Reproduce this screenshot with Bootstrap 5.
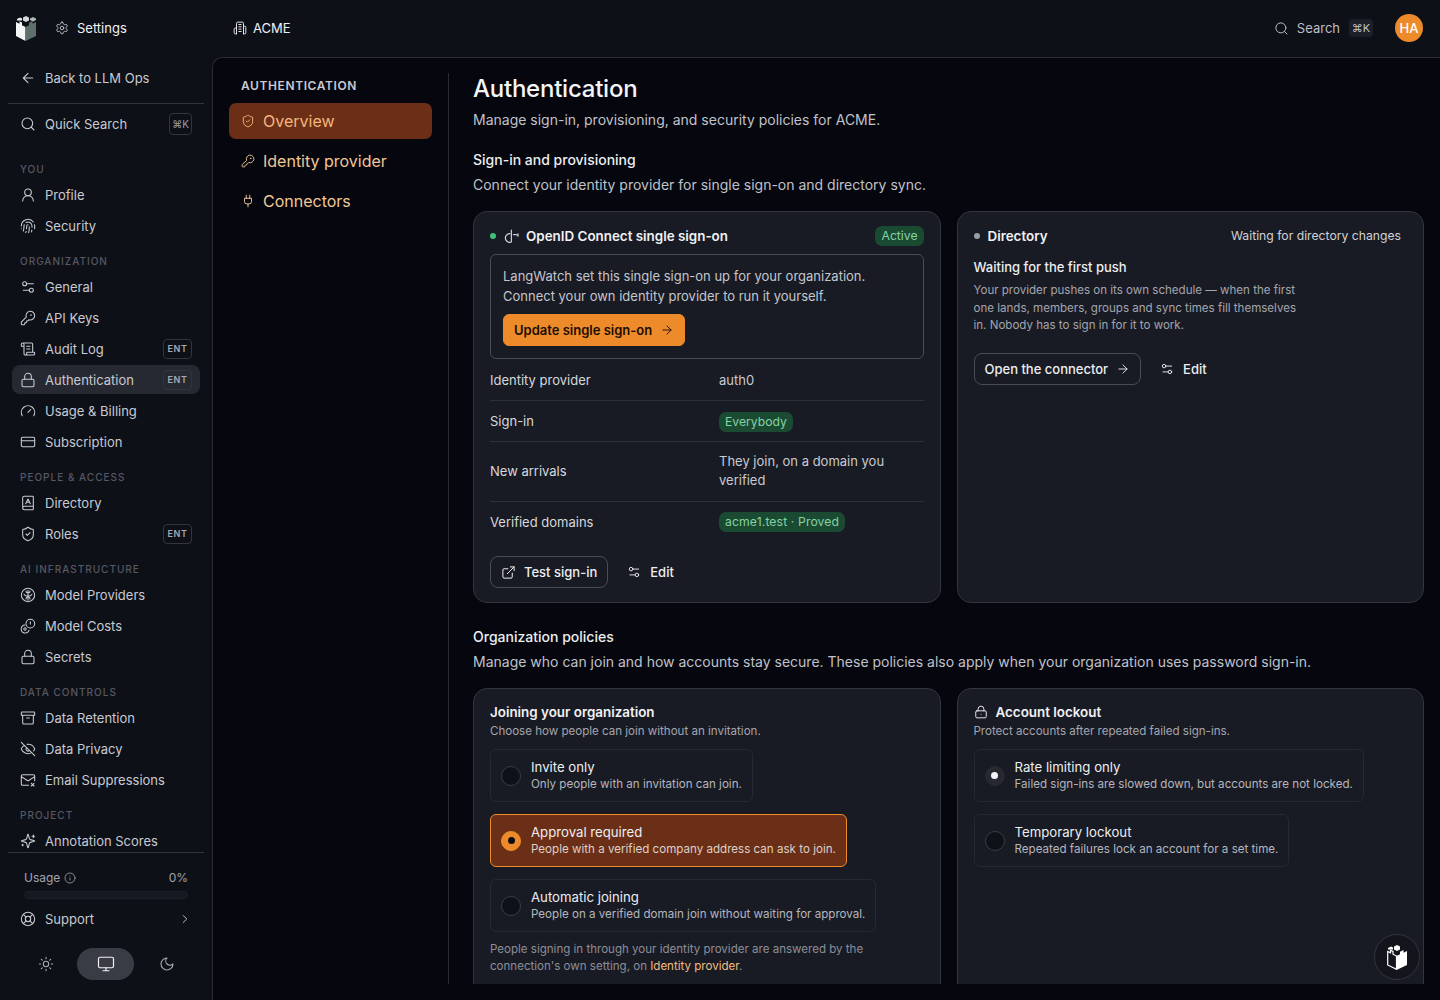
<!doctype html>
<html lang="en" data-bs-theme="dark">
<head>
<meta charset="utf-8">
<title>Authentication</title>
<link href="https://cdn.jsdelivr.net/npm/bootstrap@5.3.0/dist/css/bootstrap.min.css" rel="stylesheet">
<style>
html,body{height:1000px;overflow:hidden}
body{font-family:Inter,"Noto Sans",sans-serif;background:#0e1018;color:#e4e5ea;font-size:13px;line-height:20px}
svg.ic{width:16px;height:16px;fill:none;stroke:currentColor;stroke-width:1.6;stroke-linecap:round;stroke-linejoin:round;flex:none}
.side{width:212px;height:1000px;flex:none}
.side-top{height:56px;padding-left:16px}
.logo{width:20px;height:26px;flex:none}
.side-top .gear{margin-left:19px;margin-right:8px;width:14px;height:14px;color:#c6c8cf}
.side-top span{color:#f0f1f4}
.side-link{height:29px;padding:0 12px 0 20px;margin:0 12px 0 0;color:#c8cad1;border-radius:8px;gap:9px;text-decoration:none}
.side-back{margin-top:7px;height:29px}
.side-hr{border-top:1px solid #33353e;margin:11px 8px 5px}
.kbd-s{margin-left:auto;margin-right:-4px;border:1px solid #33353e;border-radius:4px;font-size:10px;line-height:1;color:#9b9da6;width:23px;height:22px;display:flex;align-items:center;justify-content:center;flex:none}
.ent{margin-left:auto;margin-right:-4px;border:1px solid #33353e;border-radius:4px;font-size:9px;font-weight:600;letter-spacing:.07em;color:#a8aab2;width:29px;height:20px;display:flex;align-items:center;justify-content:center;flex:none}
.side-scroll{height:714px;overflow:hidden;flex:none;padding-top:24px}
.side-label{font-size:10px;line-height:14px;letter-spacing:.1em;color:#565862;font-weight:500;text-transform:uppercase;padding-left:20px;margin:0 0 4px;height:14px}
.side-scroll .stack{display:flex;flex-direction:column;gap:2px}
.sec{margin-bottom:14px}
.side-link.on{margin-left:12px;padding-left:8px;margin-right:12px;padding-right:12px;background:#272932}
.side-foot{border-top:1px solid #33353e;margin:0 8px;padding-top:16px}
.usage{padding:0 16px;font-size:12px;line-height:18px;color:#a2a4ad}
.usage .bar{height:8px;margin-top:4px;border-radius:4px;background:#171922;border:1px solid #1d1f28}
.side-foot .side-link{margin:5px 0 0;padding:0 12px}
.theme{margin-top:15px;padding:0 20px 0 21px;justify-content:space-between;align-items:center}
.theme .pill{width:57px;height:32px;border-radius:16px;background:#3a3c45;color:#f0f1f4;display:flex;align-items:center;justify-content:center;margin:0 1px 0 -1px}
.theme>svg{color:#a8aab2;margin:0 9px}
.topbar{height:57px;flex:none;padding:0 17px 1px 21px}
.topbar .org{gap:6px;color:#f0f1f4}
.topbar .search{gap:8px;color:#bcbec6;margin-right:22px}
.kbd-t{background:#1d1f28;border-radius:4px;font-size:11px;width:24px;height:18px;display:flex;align-items:center;justify-content:center;margin-left:1px;color:#c0c2ca}
.avatar{width:28px;height:28px;border-radius:50%;background:#ed8b2a;color:#fff;font-size:13px;font-weight:500;display:flex;align-items:center;justify-content:center}
.panel{height:943px;background:#05060e;border-top:1px solid #2a2c35;border-left:1px solid #2a2c35;border-top-left-radius:10px;padding:15px 0 0;position:relative}
.subnav{width:236px;flex:none;border-right:1px solid #2a2c35;padding:0 16px;height:911px}
.subnav h6{font-size:12px;line-height:16px;font-weight:600;letter-spacing:.05em;color:#c8cad1;margin:5px 0 9px 12px}
.sub-item{height:36px;border-radius:7px;padding-left:12px;gap:8px;font-size:16px;color:#f2c796;text-decoration:none;margin-bottom:4px}
.sub-item svg{width:14px;height:14px}
.sub-item.on{background:#6b2f17;color:#f6b57c}
.content{flex:1;min-width:0;padding:0 16px 0 24px;height:911px;overflow:hidden;font-size:14px}
.content h1{font-size:24px;line-height:32px;font-weight:500;color:#f4f5f7;margin:0 0 3px;letter-spacing:-.01em}
.lead2{color:#c0c2ca;font-size:14px;line-height:24px;margin:0}
.h2x{font-size:14px;line-height:20px;font-weight:500;color:#eceef1;margin:18px 0 3px}
.card.pc{--bs-card-bg:#191b24;--bs-card-border-color:#33353e;--bs-card-border-radius:14px;--bs-card-inner-border-radius:13px;padding:14px 16px 16px;color:#e4e5ea;font-size:13px}
.card.pc2{padding-top:13px}
.row.g-3{--bs-gutter-x:16px;--bs-gutter-y:0}
.dot{width:6px;height:6px;border-radius:50%;flex:none}
.card-t{font-weight:600;color:#f0f1f4;font-size:13.4px}
.bdg{--bs-badge-padding-x:6px;--bs-badge-padding-y:0;--bs-badge-font-size:12.2px;--bs-badge-font-weight:400;--bs-badge-color:#84d3a2;--bs-badge-border-radius:7px;background:#1b4a33;line-height:20px}
.bdg-w{letter-spacing:.01em}
.inset{border:1px solid #4a4c55;border-radius:6px;padding:11px 12px 12px;margin-top:8px;color:#c4c6cd}
.btn-org{--bs-btn-bg:#ed8b2a;--bs-btn-color:#1c0d02;--bs-btn-hover-bg:#ed8b2a;--bs-btn-border-color:#ed8b2a;--bs-btn-padding-x:10px;--bs-btn-padding-y:5px;--bs-btn-font-size:13px;--bs-btn-font-weight:600;--bs-btn-border-radius:6px;--bs-btn-line-height:20px;margin-top:8px;display:inline-flex;align-items:center;gap:8px}
.btn-ln{--bs-btn-color:#eceef1;--bs-btn-border-color:#4a4c55;--bs-btn-padding-x:10px;--bs-btn-padding-y:5px;--bs-btn-font-size:13px;--bs-btn-font-weight:500;--bs-btn-border-radius:8px;--bs-btn-line-height:20px;display:inline-flex;align-items:center;gap:8px}
.btn-gh{--bs-btn-color:#eceef1;--bs-btn-border-color:transparent;--bs-btn-padding-x:10px;--bs-btn-padding-y:5px;--bs-btn-font-size:13px;--bs-btn-font-weight:500;--bs-btn-line-height:20px;display:inline-flex;align-items:center;gap:9px;margin-left:8px}
.kv{display:flex;align-items:center;border-bottom:1px solid #2e3039;color:#d6d8dd;min-height:41px}
.kv.first{min-height:42px}
.kv.tall{min-height:60px;padding-bottom:2px}
.kv.tall>div:last-child{line-height:19px}
.kv.end{border-bottom:0;min-height:39px}
.kv>div:first-child{width:229px;flex:none}
.kv>div:last-child{color:#c8cad1;line-height:20px}
.para{font-size:11.55px;line-height:17.5px;color:#a3a5ae;max-width:330px;margin:5px 0 0}
.muted12{font-size:11.55px;line-height:18px;color:#a3a5ae}
.note{margin-top:9px;line-height:17px;color:#8c8e97}
.opt{display:inline-flex;align-items:center;gap:10px;border:1px solid #262832;border-radius:6px;padding:7px 10px 9px;height:53px}
.opt .radio{margin-top:2px}
.opt .tt{font-size:13.2px;line-height:18px;color:#eceef1}
.opt .ss{font-size:11.6px;line-height:16px;color:#b4b6be}
.opt.on{background:#6b2f17;border-color:#ed8b2a}
.opt.on .ss{color:#ddcfc6}
.radio{width:20px;height:20px;border-radius:50%;background:#0f1119;border:1px solid #3a3c45;flex:none;display:flex;align-items:center;justify-content:center}
.opt.on .radio{background:#ed8b2a;border-color:#ed8b2a}
.opt.on .radio i{width:7px;height:7px;background:#0b0b0f;border-radius:50%}
.radio.gray{background:#262832;border-color:#262832}
.radio.gray i{width:7px;height:7px;background:#f5f5f7;border-radius:50%}
.opts{display:flex;flex-direction:column;align-items:flex-start;gap:12px;margin-top:9px}
.fab{position:absolute;right:20px;bottom:20px;width:46px;height:46px;border-radius:50%;background:#13141c;border:1px solid #33353e;display:flex;align-items:center;justify-content:center}
a.link-o{color:#f0bd80;text-decoration:none}
</style>
</head>
<body>
<svg width="0" height="0" class="position-absolute">
<symbol id="logo" viewBox="0 0 20 26"><polygon points="0,7 0,21 9.500,26 9.500,12 6,10.200 6,7.500 3.500,6.300 3.500,8.800" fill="#f4f6f5" stroke="none"/><polygon points="9.500,12 9.500,26 20,21 20,7 16.500,8.800 16.500,6 13,7.800 13,10.300" fill="#5f706c" stroke="none"/><polygon points="7,2.500 10,1 13,2.500 13,5.500 10,7 7,5.500" fill="#d5dbd9" stroke="none"/><polygon points="14,3.500 17,2 20,3.500 20,5 17,6.500 14,5" fill="#aeb8b5" stroke="none"/><polygon points="1,4 4,2.500 6,3.500 6,5.500 3.500,5.500 1,5.500" fill="#e8ecea" stroke="none"/></symbol>
<symbol id="logow" viewBox="0 0 20 26"><polygon points="0.700,7.500 0.700,21 9.500,25.300 9.500,12 6,10.200 6,7.500 3.500,6.300 3.500,8.800" fill="none" stroke="#fff" stroke-width="1.200"/><polygon points="9.500,12 9.500,26 20,21 20,7 16.500,8.800 16.500,6 13,7.800 13,10.300" fill="#fff" stroke="none"/><polygon points="7,2.500 10,1 13,2.500 13,5.500 10,7 7,5.500" fill="#fff" stroke="none"/><polygon points="1,4 4,2.500 6,3.500 6,5.500 1,5.500" fill="#fff" stroke="none"/></symbol>
<symbol id="arrow-left" viewBox="0 0 24 24"><path d="m12 19-7-7 7-7M19 12H5"/></symbol>
<symbol id="arrow-right" viewBox="0 0 24 24"><path d="M5 12h14M12 5l7 7-7 7"/></symbol>
<symbol id="search" viewBox="0 0 24 24"><circle cx="11" cy="11" r="8"/><path d="m21 21-4.3-4.3"/></symbol>
<symbol id="user" viewBox="0 0 24 24"><circle cx="12" cy="8" r="5"/><path d="M20 21a8 8 0 0 0-16 0"/></symbol>
<symbol id="finger" viewBox="0 0 24 24"><path d="M12 10a2 2 0 0 0-2 2c0 1.02-.1 2.51-.26 4M14 13.12c0 2.38 0 6.38-1 8.88M17.29 21.02c.12-.6.43-2.3.5-3.02M2 12a10 10 0 0 1 18-6M2 16h.01M21.8 16c.2-2 .131-5.354 0-6M5 19.5C5.5 18 6 15 6 12a6 6 0 0 1 .34-2M8.65 22c.21-.66.45-1.32.57-2M9 6.8a6 6 0 0 1 9 5.2v2"/></symbol>
<symbol id="sliders" viewBox="0 0 24 24"><path d="M20 7h-9M14 17H5"/><circle cx="17" cy="17" r="3"/><circle cx="7" cy="7" r="3"/></symbol>
<symbol id="key" viewBox="0 0 24 24"><path d="M2.586 17.414A2 2 0 0 0 2 18.828V21a1 1 0 0 0 1 1h3a1 1 0 0 0 1-1v-1a1 1 0 0 1 1-1h1a1 1 0 0 0 1-1v-1a1 1 0 0 1 1-1h.172a2 2 0 0 0 1.414-.586l.814-.814a6.5 6.5 0 1 0-4-4z"/><circle cx="16.5" cy="7.5" r=".5"/></symbol>
<symbol id="scroll" viewBox="0 0 24 24"><path d="M15 12h-5M15 8h-5M19 17V5a2 2 0 0 0-2-2H4M8 21h12a2 2 0 0 0 2-2v-1a1 1 0 0 0-1-1H11a1 1 0 0 0-1 1v1a2 2 0 1 1-4 0V5a2 2 0 1 0-4 0v2a1 1 0 0 0 1 1h3"/></symbol>
<symbol id="lock" viewBox="0 0 24 24"><rect x="3" y="11" width="18" height="11" rx="2"/><path d="M7 11V7a5 5 0 0 1 10 0v4"/></symbol>
<symbol id="lockd" viewBox="0 0 24 24"><rect x="3" y="10" width="18" height="12" rx="2"/><path d="M7 10V7a5 5 0 0 1 10 0v3M12 16h.01"/></symbol>
<symbol id="gauge" viewBox="0 0 24 24"><path d="m12 14 4-4M3.34 19a10 10 0 1 1 17.32 0"/></symbol>
<symbol id="card" viewBox="0 0 24 24"><rect x="2" y="5" width="20" height="14" rx="2"/><path d="M2 10h20"/></symbol>
<symbol id="book" viewBox="0 0 24 24"><path d="M4 19.5v-15A2.5 2.5 0 0 1 6.5 2H19a1 1 0 0 1 1 1v18a1 1 0 0 1-1 1H6.5a1 1 0 0 1 0-5H20M8.5 13l3.5-7 3.500 7M9.500 11h5"/></symbol>
<symbol id="shield" viewBox="0 0 24 24"><path d="M20 13c0 5-3.500 7.500-7.660 8.950a1 1 0 0 1-.67-.01C7.500 20.500 4 18 4 13V6a1 1 0 0 1 1-1c2 0 4.500-1.200 6.240-2.720a1.170 1.170 0 0 1 1.520 0C14.510 3.810 17 5 19 5a1 1 0 0 1 1 1zM9 12l2 2 4-4"/></symbol>
<symbol id="brain" viewBox="0 0 24 24"><circle cx="12" cy="12" r="10"/><path d="M12 5v15M12 9c-2 0-3-1-3-3M12 9c2 0 3-1 3-3M12 14c-3 0-5-1-6-3M12 14c3 0 5-1 6-3M9 18c0-2 1-3 3-3s3 1 3 3"/></symbol>
<symbol id="coins" viewBox="0 0 24 24"><circle cx="15.500" cy="8.500" r="6.500"/><path d="M15.500 5.500v3.500M7.500 10.500a6 6 0 1 0 6 8"/><circle cx="7.500" cy="16.500" r="1.800"/></symbol>
<symbol id="archive" viewBox="0 0 24 24"><rect x="2" y="3" width="20" height="5" rx="1"/><path d="M4 8v11a2 2 0 0 0 2 2h12a2 2 0 0 0 2-2V8M10 12h4"/></symbol>
<symbol id="eyeoff" viewBox="0 0 24 24"><path d="M10.733 5.076a10.744 10.744 0 0 1 11.205 6.575 1 1 0 0 1 0 .696 10.747 10.747 0 0 1-1.444 2.490M14.084 14.158a3 3 0 0 1-4.242-4.242M17.479 17.499a10.750 10.750 0 0 1-15.417-5.151 1 1 0 0 1 0-.696 10.750 10.750 0 0 1 4.446-5.143M2 2l20 20"/></symbol>
<symbol id="mailx" viewBox="0 0 24 24"><path d="M22 13V6a2 2 0 0 0-2-2H4a2 2 0 0 0-2 2v12c0 1.100.9 2 2 2h9M22 7l-8.970 5.700a1.940 1.940 0 0 1-2.060 0L2 7M17 17l4 4M21 17l-4 4"/></symbol>
<symbol id="spark" viewBox="0 0 24 24"><path d="M9.937 15.500A2 2 0 0 0 8.500 14.063l-6.135-1.582a.5.5 0 0 1 0-.962L8.500 9.936A2 2 0 0 0 9.937 8.500l1.582-6.135a.5.5 0 0 1 .963 0L14.063 8.500A2 2 0 0 0 15.500 9.937l6.135 1.581a.5.5 0 0 1 0 .964L15.500 14.063a2 2 0 0 0-1.437 1.437l-1.582 6.135a.5.5 0 0 1-.963 0zM20 3v4M22 5h-4M4 17v2M5 18H3"/></symbol>
<symbol id="info" viewBox="0 0 24 24"><circle cx="12" cy="12" r="10"/><path d="M12 16v-4M12 8h.01"/></symbol>
<symbol id="buoy" viewBox="0 0 24 24"><circle cx="12" cy="12" r="10"/><path d="m4.930 4.930 4.240 4.240M14.830 9.170l4.240-4.240M14.830 14.830l4.240 4.240M9.170 14.830l-4.240 4.240"/><circle cx="12" cy="12" r="4"/></symbol>
<symbol id="chev" viewBox="0 0 24 24"><path d="m9 18 6-6-6-6"/></symbol>
<symbol id="sun" viewBox="0 0 24 24"><circle cx="12" cy="12" r="4"/><path d="M12 2v2M12 20v2M4.930 4.930l1.410 1.410M17.660 17.660l1.410 1.410M2 12h2M20 12h2M6.340 17.660l-1.410 1.410M19.070 4.930l-1.410 1.410"/></symbol>
<symbol id="monitor" viewBox="0 0 24 24"><rect x="2" y="3" width="20" height="14" rx="2"/><path d="M8 21h8M12 17v4"/></symbol>
<symbol id="moon" viewBox="0 0 24 24"><path d="M12 3a6 6 0 0 0 9 9 9 9 0 1 1-9-9Z"/></symbol>
<symbol id="gear" viewBox="0 0 24 24"><path d="M12.220 2h-.44a2 2 0 0 0-2 2v.18a2 2 0 0 1-1 1.730l-.43.25a2 2 0 0 1-2 0l-.15-.08a2 2 0 0 0-2.730.73l-.22.38a2 2 0 0 0 .73 2.730l.15.1a2 2 0 0 1 1 1.720v.51a2 2 0 0 1-1 1.740l-.15.09a2 2 0 0 0-.73 2.730l.22.38a2 2 0 0 0 2.730.73l.15-.08a2 2 0 0 1 2 0l.43.25a2 2 0 0 1 1 1.730V20a2 2 0 0 0 2 2h.44a2 2 0 0 0 2-2v-.18a2 2 0 0 1 1-1.730l.43-.25a2 2 0 0 1 2 0l.15.08a2 2 0 0 0 2.730-.73l.22-.39a2 2 0 0 0-.73-2.730l-.15-.08a2 2 0 0 1-1-1.740v-.5a2 2 0 0 1 1-1.740l.15-.09a2 2 0 0 0 .73-2.730l-.22-.38a2 2 0 0 0-2.730-.73l-.15.08a2 2 0 0 1-2 0l-.43-.25a2 2 0 0 1-1-1.730V4a2 2 0 0 0-2-2z"/><circle cx="12" cy="12" r="3"/></symbol>
<symbol id="bldg" viewBox="0 0 24 24"><path d="M6 22V4a2 2 0 0 1 2-2h8a2 2 0 0 1 2 2v18M6 12H4a2 2 0 0 0-2 2v6a2 2 0 0 0 2 2h2M18 9h2a2 2 0 0 1 2 2v9a2 2 0 0 1-2 2h-2M10 6h4M10 10h4M10 14h4M10 18h4"/></symbol>
<symbol id="plug" viewBox="0 0 24 24"><path d="M12 22v-5M9 8V2M15 8V2M18 8v5a4 4 0 0 1-4 4h-4a4 4 0 0 1-4-4V8Z"/></symbol>
<symbol id="ext" viewBox="0 0 24 24"><path d="M15 3h6v6M10 14 21 3M18 13v6a2 2 0 0 1-2 2H5a2 2 0 0 1-2-2V8a2 2 0 0 1 2-2h6"/></symbol>
<symbol id="oid" viewBox="0 0 24 24"><path d="M11 3v18M9 8.500a6.500 6.500 0 1 0 2 12.500M14 10c2-.5 4-.5 5.500.5M21 8.500v4"/></symbol>
</svg>

<div class="d-flex">
<aside class="side d-flex flex-column">
  <div class="side-top d-flex align-items-center">
    <svg class="logo"><use href="#logo"/></svg>
    <svg class="ic gear"><use href="#gear"/></svg><span>Settings</span>
  </div>
  <a class="side-link side-back d-flex align-items-center" href="#"><svg class="ic"><use href="#arrow-left"/></svg>Back to LLM Ops</a>
  <div class="side-hr"></div>
  <a class="side-link d-flex align-items-center" href="#"><svg class="ic"><use href="#search"/></svg>Quick Search<span class="kbd-s">⌘K</span></a>
  <div class="side-scroll">
    <div class="sec"><div class="side-label">You</div><div class="stack">
      <a class="side-link d-flex align-items-center" href="#"><svg class="ic"><use href="#user"/></svg>Profile</a>
      <a class="side-link d-flex align-items-center" href="#"><svg class="ic"><use href="#finger"/></svg>Security</a>
    </div></div>
    <div class="sec"><div class="side-label">Organization</div><div class="stack">
      <a class="side-link d-flex align-items-center" href="#"><svg class="ic"><use href="#sliders"/></svg>General</a>
      <a class="side-link d-flex align-items-center" href="#"><svg class="ic"><use href="#key"/></svg>API Keys</a>
      <a class="side-link d-flex align-items-center" href="#"><svg class="ic"><use href="#scroll"/></svg>Audit Log<span class="ent">ENT</span></a>
      <a class="side-link on d-flex align-items-center" href="#"><svg class="ic"><use href="#lock"/></svg>Authentication<span class="ent">ENT</span></a>
      <a class="side-link d-flex align-items-center" href="#"><svg class="ic"><use href="#gauge"/></svg>Usage &amp; Billing</a>
      <a class="side-link d-flex align-items-center" href="#"><svg class="ic"><use href="#card"/></svg>Subscription</a>
    </div></div>
    <div class="sec"><div class="side-label">People &amp; Access</div><div class="stack">
      <a class="side-link d-flex align-items-center" href="#"><svg class="ic"><use href="#book"/></svg>Directory</a>
      <a class="side-link d-flex align-items-center" href="#"><svg class="ic"><use href="#shield"/></svg>Roles<span class="ent">ENT</span></a>
    </div></div>
    <div class="sec"><div class="side-label">AI Infrastructure</div><div class="stack">
      <a class="side-link d-flex align-items-center" href="#"><svg class="ic"><use href="#brain"/></svg>Model Providers</a>
      <a class="side-link d-flex align-items-center" href="#"><svg class="ic"><use href="#coins"/></svg>Model Costs</a>
      <a class="side-link d-flex align-items-center" href="#"><svg class="ic"><use href="#lock"/></svg>Secrets</a>
    </div></div>
    <div class="sec"><div class="side-label">Data Controls</div><div class="stack">
      <a class="side-link d-flex align-items-center" href="#"><svg class="ic"><use href="#archive"/></svg>Data Retention</a>
      <a class="side-link d-flex align-items-center" href="#"><svg class="ic"><use href="#eyeoff"/></svg>Data Privacy</a>
      <a class="side-link d-flex align-items-center" href="#"><svg class="ic"><use href="#mailx"/></svg>Email Suppressions</a>
    </div></div>
    <div class="sec"><div class="side-label">Project</div><div class="stack">
      <a class="side-link d-flex align-items-center" href="#"><svg class="ic"><use href="#spark"/></svg>Annotation Scores</a>
    </div></div>
  </div>
  <div class="side-foot">
    <div class="usage">
      <div class="d-flex justify-content-between align-items-center"><span class="d-flex align-items-center gap-1">Usage <svg class="ic" style="width:12px;height:12px"><use href="#info"/></svg></span><span>0%</span></div>
      <div class="bar"></div>
    </div>
    <a class="side-link d-flex align-items-center" href="#"><svg class="ic"><use href="#buoy"/></svg>Support<svg class="ic ms-auto" style="width:14px;height:14px"><use href="#chev"/></svg></a>
    <div class="theme d-flex">
      <svg class="ic"><use href="#sun"/></svg>
      <span class="pill"><svg class="ic" style="width:18px;height:18px"><use href="#monitor"/></svg></span>
      <svg class="ic"><use href="#moon"/></svg>
    </div>
  </div>
</aside>

<div class="flex-grow-1 d-flex flex-column" style="min-width:0">
  <header class="topbar d-flex align-items-center justify-content-between">
    <div class="org d-flex align-items-center"><svg class="ic" style="width:14px;height:14px"><use href="#bldg"/></svg>ACME</div>
    <div class="d-flex align-items-center">
      <div class="search d-flex align-items-center"><svg class="ic" style="width:15px;height:15px"><use href="#search"/></svg>Search<span class="kbd-t">⌘K</span></div>
      <div class="avatar">HA</div>
    </div>
  </header>
  <main class="panel d-flex">
    <nav class="subnav">
      <h6>AUTHENTICATION</h6>
      <a class="sub-item on d-flex align-items-center" href="#"><svg class="ic"><use href="#shield"/></svg>Overview</a>
      <a class="sub-item d-flex align-items-center" href="#"><svg class="ic"><use href="#key"/></svg>Identity provider</a>
      <a class="sub-item d-flex align-items-center" href="#"><svg class="ic"><use href="#plug"/></svg>Connectors</a>
    </nav>
    <section class="content">
      <h1>Authentication</h1>
      <p class="lead2">Manage sign-in, provisioning, and security policies for ACME.</p>
      <div class="h2x">Sign-in and provisioning</div>
      <p class="lead2" style="margin-bottom:14px">Connect your identity provider for single sign-on and directory sync.</p>
      <div class="row g-3">
        <div class="col-6">
          <div class="card pc" style="height:392px">
            <div class="d-flex align-items-center">
              <span class="dot me-2" style="background:#3fbf77"></span>
              <svg class="ic" style="margin-right:6px"><use href="#oid"/></svg>
              <span class="card-t">OpenID Connect single sign-on</span>
              <span class="badge bdg ms-auto">Active</span>
            </div>
            <div class="inset">
              LangWatch set this single sign-on up for your organization.<br>Connect your own identity provider to run it yourself.
              <div><a class="btn btn-org" href="#">Update single sign-on <svg class="ic" style="width:14px;height:14px"><use href="#arrow-right"/></svg></a></div>
            </div>
            <div class="kv first"><div>Identity provider</div><div>auth0</div></div>
            <div class="kv"><div>Sign-in</div><div><span class="badge bdg">Everybody</span></div></div>
            <div class="kv tall"><div>New arrivals</div><div>They join, on a domain you verified</div></div>
            <div class="kv end"><div>Verified domains</div><div><span class="badge bdg bdg-w">acme1.test · Proved</span></div></div>
            <div class="d-flex align-items-center" style="margin-top:15px">
              <a class="btn btn-ln" href="#"><svg class="ic" style="width:15px;height:15px"><use href="#ext"/></svg>Test sign-in</a>
              <a class="btn btn-gh" href="#"><svg class="ic" style="width:14px;height:14px"><use href="#sliders"/></svg>Edit</a>
            </div>
          </div>
        </div>
        <div class="col-6">
          <div class="card pc" style="height:392px">
            <div class="d-flex align-items-center" style="height:20px">
              <span class="dot me-2" style="background:#9b9da6"></span>
              <span class="card-t">Directory</span>
              <span class="ms-auto" style="font-size:12.2px;color:#d0d2d8;margin-right:6px">Waiting for directory changes</span>
            </div>
            <div style="margin-top:11px;font-weight:500;color:#eceef1">Waiting for the first push</div>
            <p class="para">Your provider pushes on its own schedule — when the first one lands, members, groups and sync times fill themselves in. Nobody has to sign in for it to work.</p>
            <div class="d-flex align-items-center" style="margin-top:18px">
              <a class="btn btn-ln" href="#">Open the connector <svg class="ic" style="width:14px;height:14px"><use href="#arrow-right"/></svg></a>
              <a class="btn btn-gh" href="#"><svg class="ic" style="width:14px;height:14px"><use href="#sliders"/></svg>Edit</a>
            </div>
          </div>
        </div>
      </div>
      <div class="h2x" style="margin-top:24px">Organization policies</div>
      <p class="lead2" style="margin-bottom:14px">Manage who can join and how accounts stay secure. These policies also apply when your organization uses password sign-in.</p>
      <div class="row g-3">
        <div class="col-6">
          <div class="card pc pc2" style="height:400px">
            <div class="card-t">Joining your organization</div>
            <div class="muted12">Choose how people can join without an invitation.</div>
            <div class="opts">
              <div class="opt"><span class="radio"></span><div><div class="tt">Invite only</div><div class="ss">Only people with an invitation can join.</div></div></div>
              <div class="opt on"><span class="radio"><i></i></span><div><div class="tt">Approval required</div><div class="ss">People with a verified company address can ask to join.</div></div></div>
              <div class="opt"><span class="radio"></span><div><div class="tt">Automatic joining</div><div class="ss">People on a verified domain join without waiting for approval.</div></div></div>
            </div>
            <div class="muted12 note">People signing in through your identity provider are answered by the connection's own setting, on <a class="link-o" href="#">Identity provider</a>.</div>
          </div>
        </div>
        <div class="col-6">
          <div class="card pc pc2" style="height:400px">
            <div class="d-flex align-items-center gap-2 card-t"><svg class="ic" style="width:14px;height:14px"><use href="#lockd"/></svg>Account lockout</div>
            <div class="muted12">Protect accounts after repeated failed sign-ins.</div>
            <div class="opts">
              <div class="opt"><span class="radio gray"><i></i></span><div><div class="tt">Rate limiting only</div><div class="ss">Failed sign-ins are slowed down, but accounts are not locked.</div></div></div>
              <div class="opt"><span class="radio"></span><div><div class="tt">Temporary lockout</div><div class="ss">Repeated failures lock an account for a set time.</div></div></div>
            </div>
          </div>
        </div>
      </div>
    </section>
    <div class="fab"><svg style="width:20px;height:26px"><use href="#logow"/></svg></div>
  </main>
</div>
</div>
<script src="https://cdn.jsdelivr.net/npm/bootstrap@5.3.0/dist/js/bootstrap.bundle.min.js"></script>
</body>
</html>
